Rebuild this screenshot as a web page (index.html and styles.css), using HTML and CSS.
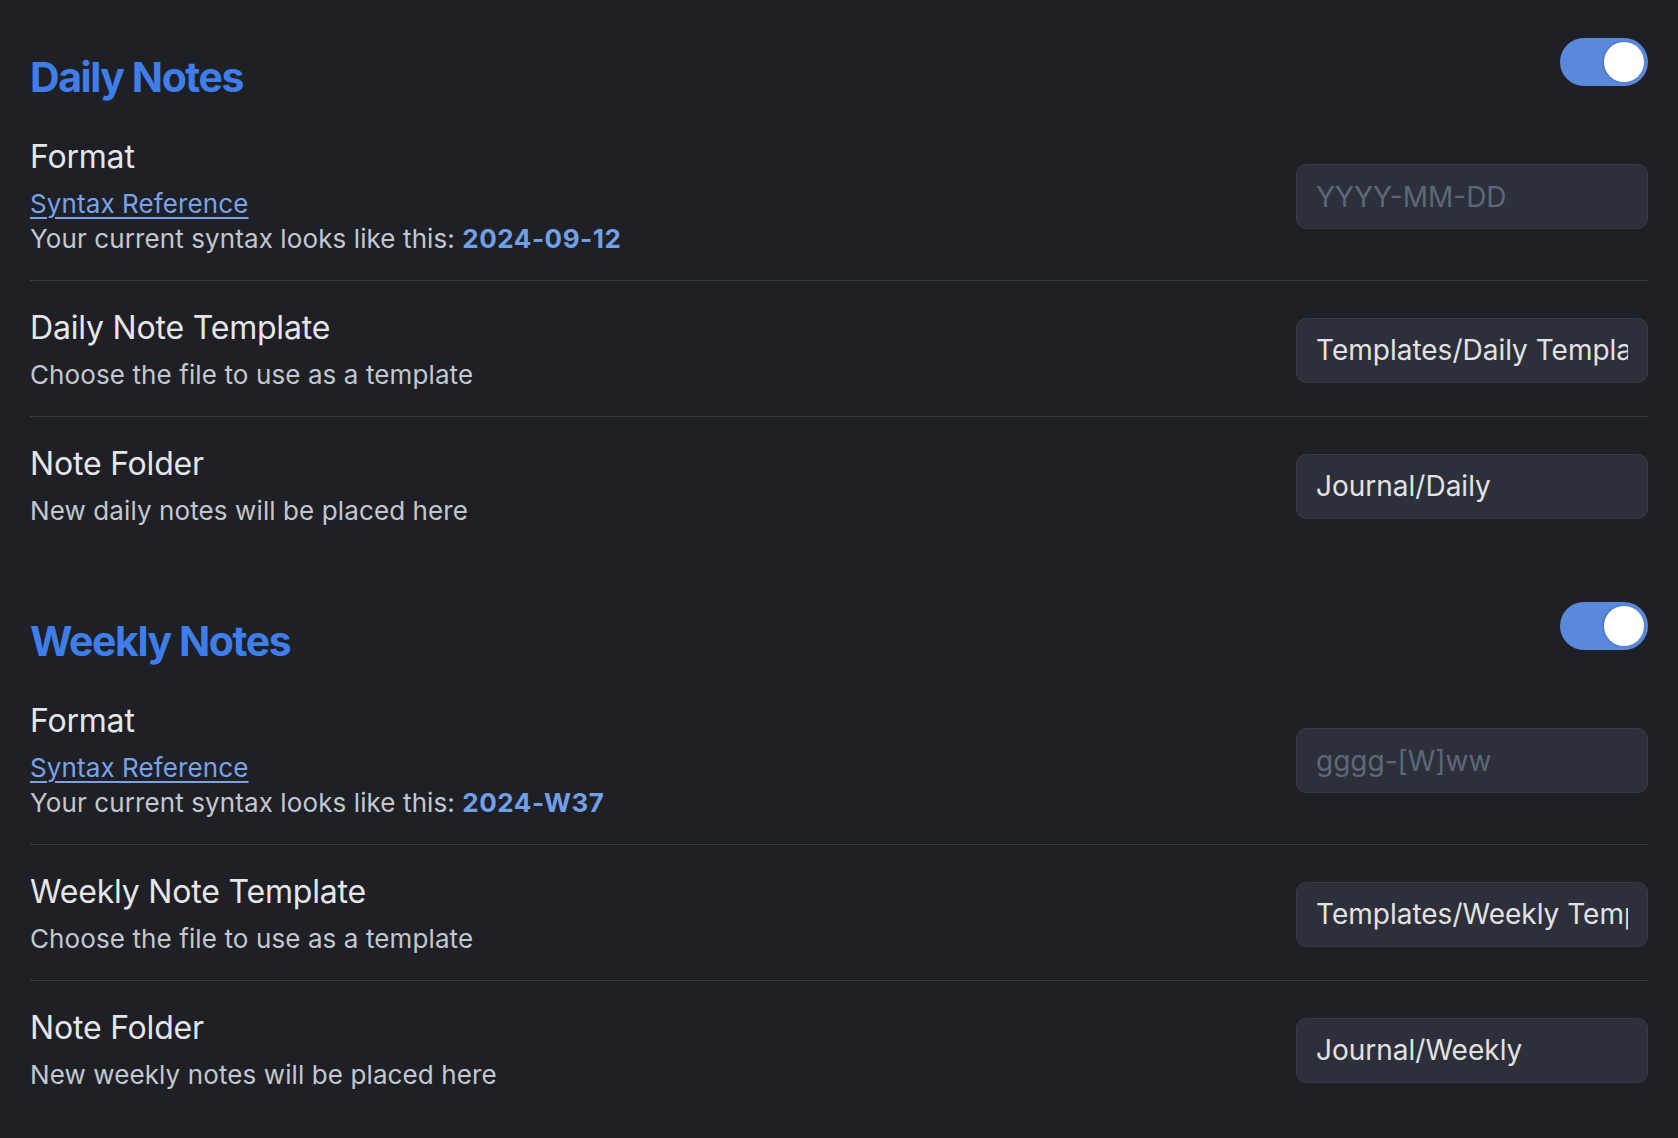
FILE: index.html
```html
<!DOCTYPE html>
<html lang="en">
<head>
<meta charset="utf-8">
<title>Periodic Notes Settings</title>
<link rel="stylesheet" href="styles.css">
</head>
<body>
<main class="settings">
  <section class="group">
    <header class="group-head">
      <h2 class="group-title">Daily Notes</h2>
      <label class="toggle is-on"><span class="knob"></span></label>
    </header>
    <div class="row first">
      <div class="info">
        <div class="name">Format</div>
        <div class="desc">
          <a class="link" href="#">Syntax Reference</a><br>
          Your current syntax looks like this: <b class="value">2024-09-12</b>
        </div>
      </div>
      <input class="field" type="text" placeholder="YYYY-MM-DD">
    </div>
    <div class="row">
      <div class="info">
        <div class="name">Daily Note Template</div>
        <div class="desc">Choose the file to use as a template</div>
      </div>
      <input class="field" type="text" value="Templates/Daily Template">
    </div>
    <div class="row">
      <div class="info">
        <div class="name">Note Folder</div>
        <div class="desc">New daily notes will be placed here</div>
      </div>
      <input class="field" type="text" value="Journal/Daily">
    </div>
  </section>

  <section class="group">
    <header class="group-head">
      <h2 class="group-title">Weekly Notes</h2>
      <label class="toggle is-on"><span class="knob"></span></label>
    </header>
    <div class="row first">
      <div class="info">
        <div class="name">Format</div>
        <div class="desc">
          <a class="link" href="#">Syntax Reference</a><br>
          Your current syntax looks like this: <b class="value">2024-W37</b>
        </div>
      </div>
      <input class="field" type="text" placeholder="gggg-[W]ww">
    </div>
    <div class="row">
      <div class="info">
        <div class="name">Weekly Note Template</div>
        <div class="desc">Choose the file to use as a template</div>
      </div>
      <input class="field" type="text" value="Templates/Weekly Template">
    </div>
    <div class="row">
      <div class="info">
        <div class="name">Note Folder</div>
        <div class="desc">New weekly notes will be placed here</div>
      </div>
      <input class="field" type="text" value="Journal/Weekly">
    </div>
  </section>
</main>
</body>
</html>
```

FILE: styles.css
```css
* { box-sizing: border-box; }

html, body {
  margin: 0;
  background: #1e2026;
}

body {
  font-family: Inter, "Noto Sans", "Liberation Sans", sans-serif;
  color: #e4e4e6;
}

.settings {
  padding: 38px 30px 20px 30px;
  display: flex;
  flex-direction: column;
  gap: 50px;
}

.group-head {
  display: flex;
  justify-content: space-between;
  align-items: flex-start;
  height: 72px;
}

.group-title {
  margin: 14px 0 0 0;
  font-size: 41px;
  line-height: 50px;
  font-weight: 700;
  color: #3f7ee8;
  letter-spacing: -0.035em;
}

.toggle {
  width: 88px;
  height: 48px;
  border-radius: 24px;
  background: #5a88da;
  display: flex;
  align-items: center;
  justify-content: flex-end;
  padding: 0 4px;
}

.knob {
  width: 40px;
  height: 40px;
  border-radius: 50%;
  background: #ffffff;
  box-shadow: -1px 0 3px rgba(0, 0, 0, 0.18);
}

.row {
  display: flex;
  align-items: center;
  justify-content: space-between;
  border-top: 1px solid #3a3c43;
  padding: 27px 0 24px 0;
}

.row.first {
  border-top: none;
}

.info {
  display: flex;
  flex-direction: column;
  gap: 9px;
}

.name {
  font-size: 32px;
  line-height: 40px;
  color: #e6e6e8;
  letter-spacing: -0.006em;
}

.desc {
  font-size: 26px;
  line-height: 35px;
  color: #c3c7cf;
  letter-spacing: 0.004em;
}

.link {
  color: #7aa2e6;
  text-decoration: underline;
  text-decoration-thickness: 2px;
  text-underline-offset: 4px;
}

.value {
  color: #72a0e6;
  font-weight: 700;
  letter-spacing: 0.02em;
}

.field {
  width: 352px;
  height: 65px;
  flex: none;
  background: #2d303a;
  border: 1px solid #383b45;
  border-radius: 10px;
  padding: 0 19px;
  font-family: Inter, "Noto Sans", "Liberation Sans", sans-serif;
  font-size: 28px;
  color: #e2e2e4;
  outline: none;
}

.field::placeholder {
  color: #5c6879;
}
```
